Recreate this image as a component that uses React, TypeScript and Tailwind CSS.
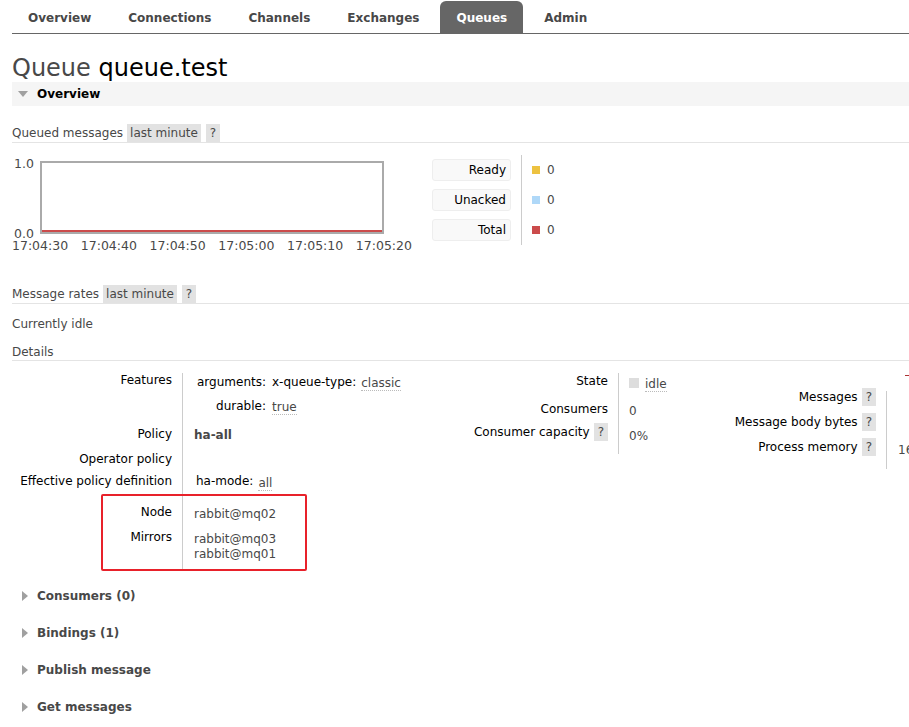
import React from "react";

const tabs = ["Overview", "Connections", "Channels", "Exchanges", "Queues", "Admin"];
const times = ["17:04:30", "17:04:40", "17:04:50", "17:05:00", "17:05:10", "17:05:20"];
const legend = [
  { label: "Ready", color: "bg-[#edc240]" },
  { label: "Unacked", color: "bg-[#afd8f8]" },
  { label: "Total", color: "bg-[#cb4b4b]" },
];
const collapsed = ["Consumers (0)", "Bindings (1)", "Publish message", "Get messages"];

function Help() {
  return <span className="ml-[4px] inline-block h-[18px] bg-[#e2e2e2] px-[4px] leading-[18px] text-[#484848]">?</span>;
}

function RangeHeader({ title }: { title: string }) {
  return (
    <div className="flex h-[19px] items-start border-b border-[#e4e4e4]">
      <span className="leading-[18px]">{title}</span>
      <span className="ml-[4px] h-[18px] bg-[#e2e2e2] px-[3px] leading-[18px]">last minute</span>
      <span className="ml-[5px] h-[18px] bg-[#e2e2e2] px-[4px] leading-[18px]">?</span>
    </div>
  );
}

function Dotted({ children }: { children: React.ReactNode }) {
  return <span className="border-b border-dotted border-[#bbb] text-[#484848]">{children}</span>;
}

export default function App() {
  return (
    <div className="relative h-[727px] w-[909px] overflow-hidden bg-white font-['DejaVu_Sans',Verdana,sans-serif] text-[12px] leading-[14px] text-[#484848]">
      {/* nav */}
      <div className="ml-[12px] flex h-[34px] items-end gap-[5px] border-b border-[#666]">
        {tabs.map((t) =>
          t === "Queues" ? (
            <div key={t} className="flex h-[32px] items-center rounded-t-[6px] bg-[#666] px-[16px] pt-[2px] font-bold text-white">
              {t}
            </div>
          ) : (
            <div key={t} className="flex h-[32px] items-center px-[16px] pt-[2px] font-bold text-[#484848]">
              {t}
            </div>
          )
        )}
      </div>

      <h1 className="mt-[21px] ml-[12px] h-[27px] text-[24px] leading-[27px] font-normal text-[#484848]">
        Queue <span className="text-black">queue.test</span>
      </h1>

      <div className="ml-[12px] flex h-[24px] items-center bg-[#f5f5f5]">
        <svg width="10" height="6" viewBox="0 0 10 6" className="ml-[6px] mr-[9px]">
          <polygon points="0,0 10,0 5,6" fill="#a0a0a0" />
        </svg>
        <span className="font-bold text-black">Overview</span>
      </div>

      <div className="mt-[18px] ml-[12px]">
        <RangeHeader title="Queued messages" />
      </div>

      {/* chart + legend */}
      <div className="mt-[12px] ml-[12px] flex">
        <div className="w-[400px] shrink-0 pt-[6px]">
          <div className="flex">
            <div className="flex h-[73px] w-[28px] flex-col justify-between pl-[2px] text-[12.5px]">
              <span className="-mt-[4px]">1.0</span>
              <span className="-mb-[7px]">0.0</span>
            </div>
            <div className="relative h-[73px] w-[344px] border-2 border-[#aaa]">
              <div className="absolute bottom-0 left-0 right-0 h-[2px] bg-[#cb4b4b]" />
            </div>
          </div>
          <div className="mt-[5px] flex justify-between text-[12.5px]">
            {times.map((t) => (
              <span key={t}>{t}</span>
            ))}
          </div>
        </div>
        <div className="ml-[20px] flex shrink-0 flex-col gap-[8px] pt-[4px]">
          {legend.map((l) => (
            <div key={l.label} className="h-[22px] w-[79px] rounded-[3px] border border-[#eee] bg-[#f9f9f9] pr-[4px] text-right leading-[20px] text-black">
              {l.label}
            </div>
          ))}
        </div>
        <div className="ml-[10px] h-[90px] border-l border-[#ccc] pl-[10px] pt-[8px]">
          {legend.map((l) => (
            <div key={l.label} className="flex h-[30px] items-start">
              <span className={`mt-[3px] h-[8px] w-[8px] ${l.color}`} />
              <span className="ml-[7px] text-[#484848]">0</span>
            </div>
          ))}
        </div>
      </div>

      <div className="mt-[32px] ml-[12px]">
        <RangeHeader title="Message rates" />
      </div>

      <div className="mt-[13px] ml-[12px]">Currently idle</div>

      <div className="mt-[13px] ml-[12px] h-[17px] border-b border-[#e4e4e4] pt-[1px]">Details</div>

      {/* details */}
      <div className="relative mt-[12px] flex">
        <div className="w-[450px] shrink-0">
          <div className="flex h-[50px]">
            <div className="w-[182px] pr-[10px] text-right text-black">Features</div>
            <div className="border-l border-[#ccc] pl-[13px] pt-[2px]">
              <div className="flex">
                <span className="w-[70px] text-right text-black">arguments:</span>
                <span className="ml-[6px] text-black">x-queue-type:</span>
                <span className="ml-[5px] mt-[1px]"><Dotted>classic</Dotted></span>
              </div>
              <div className="mt-[9px] flex">
                <span className="w-[70px] text-right text-black">durable:</span>
                <span className="ml-[6px] mt-[1px]"><Dotted>true</Dotted></span>
              </div>
            </div>
          </div>
          <div className="flex h-[25px]">
            <div className="w-[182px] pr-[10px] pt-[4px] text-right text-black">Policy</div>
            <div className="border-l border-[#ccc] pl-[11px] pt-[5px] font-bold">ha-all</div>
          </div>
          <div className="flex h-[22px]">
            <div className="w-[182px] pr-[10px] pt-[4px] text-right text-black">Operator policy</div>
            <div className="border-l border-[#ccc] pl-[11px]" />
          </div>
          <div className="flex h-[30px]">
            <div className="w-[182px] pr-[10px] pt-[4px] text-right text-black">Effective policy definition</div>
            <div className="flex border-l border-[#ccc] pl-[13px] pt-[4px]">
              <span className="text-black">ha-mode:</span>
              <span className="ml-[5px] mt-[2px]"><Dotted>all</Dotted></span>
            </div>
          </div>
          <div className="flex h-[25px]">
            <div className="w-[182px] pr-[10px] pt-[5px] text-right text-black">Node</div>
            <div className="border-l border-[#ccc] pl-[11px] pt-[7px]">rabbit@mq02</div>
          </div>
          <div className="flex h-[46px]">
            <div className="w-[182px] pr-[10px] pt-[5px] text-right text-black">Mirrors</div>
            <div className="border-l border-[#ccc] pl-[11px] pt-[7px] leading-[15px]">
              <div>rabbit@mq03</div>
              <div>rabbit@mq01</div>
            </div>
          </div>
        </div>

        <div className="w-[250px] shrink-0">
          <div className="flex h-[24px]">
            <div className="w-[168px] pr-[10px] pt-[1px] text-right text-black">State</div>
            <div className="flex w-[82px] items-start border-l border-[#ccc] pl-[10px] pt-[4px]">
              <span className="mt-[1px] h-[10px] w-[10px] bg-[#ddd]" />
              <span className="ml-[6px]"><Dotted>idle</Dotted></span>
            </div>
          </div>
          <div className="flex h-[25px]">
            <div className="w-[168px] pr-[10px] pt-[5px] text-right text-black">Consumers</div>
            <div className="w-[82px] border-l border-[#ccc] pl-[10px] pt-[7px]">0</div>
          </div>
          <div className="flex h-[32px]">
            <div className="flex w-[168px] items-start justify-end pr-[10px] pt-[1px] text-black">
              <span className="pt-[2px]">Consumer capacity</span>
              <Help />
            </div>
            <div className="w-[82px] border-l border-[#ccc] pl-[10px] pt-[7px]">0%</div>
          </div>
        </div>

        <div className="w-[260px] shrink-0">
          <div className="h-[15px] pl-[205px] pt-[2px]">
            <div className="h-[1px] w-[5px] bg-[#a33]" />
          </div>
          {["Messages", "Message body bytes", "Process memory"].map((m, i) => (
            <div key={m} className="flex h-[25px]">
              <div className="flex w-[186px] items-start justify-end pr-[10px] text-black">
                <span className="pt-[2px]">{m}</span>
                <Help />
              </div>
              <div className={`border-l border-[#ccc] pl-[11px] ${i === 0 ? "mt-[3px]" : ""} ${i === 2 ? "h-[31px] pt-[5px]" : ""}`}>
                {i === 2 ? "16" : ""}
              </div>
            </div>
          ))}
        </div>

        <div className="absolute left-[101px] top-[121px] h-[77px] w-[206px] rounded-[2px] border-2 border-[#e8212a]" />
      </div>

      {/* collapsed sections */}
      <div className="mt-[13px] ml-[12px] flex flex-col gap-[13px]">
        {collapsed.map((c) => (
          <div key={c} className="flex h-[24px] items-center">
            <svg width="6" height="10" viewBox="0 0 6 10" className="ml-[10px] mr-[9px]">
              <polygon points="0,0 6,5 0,10" fill="#a0a0a0" />
            </svg>
            <span className="font-bold text-[#484848]">{c}</span>
          </div>
        ))}
      </div>
    </div>
  );
}
